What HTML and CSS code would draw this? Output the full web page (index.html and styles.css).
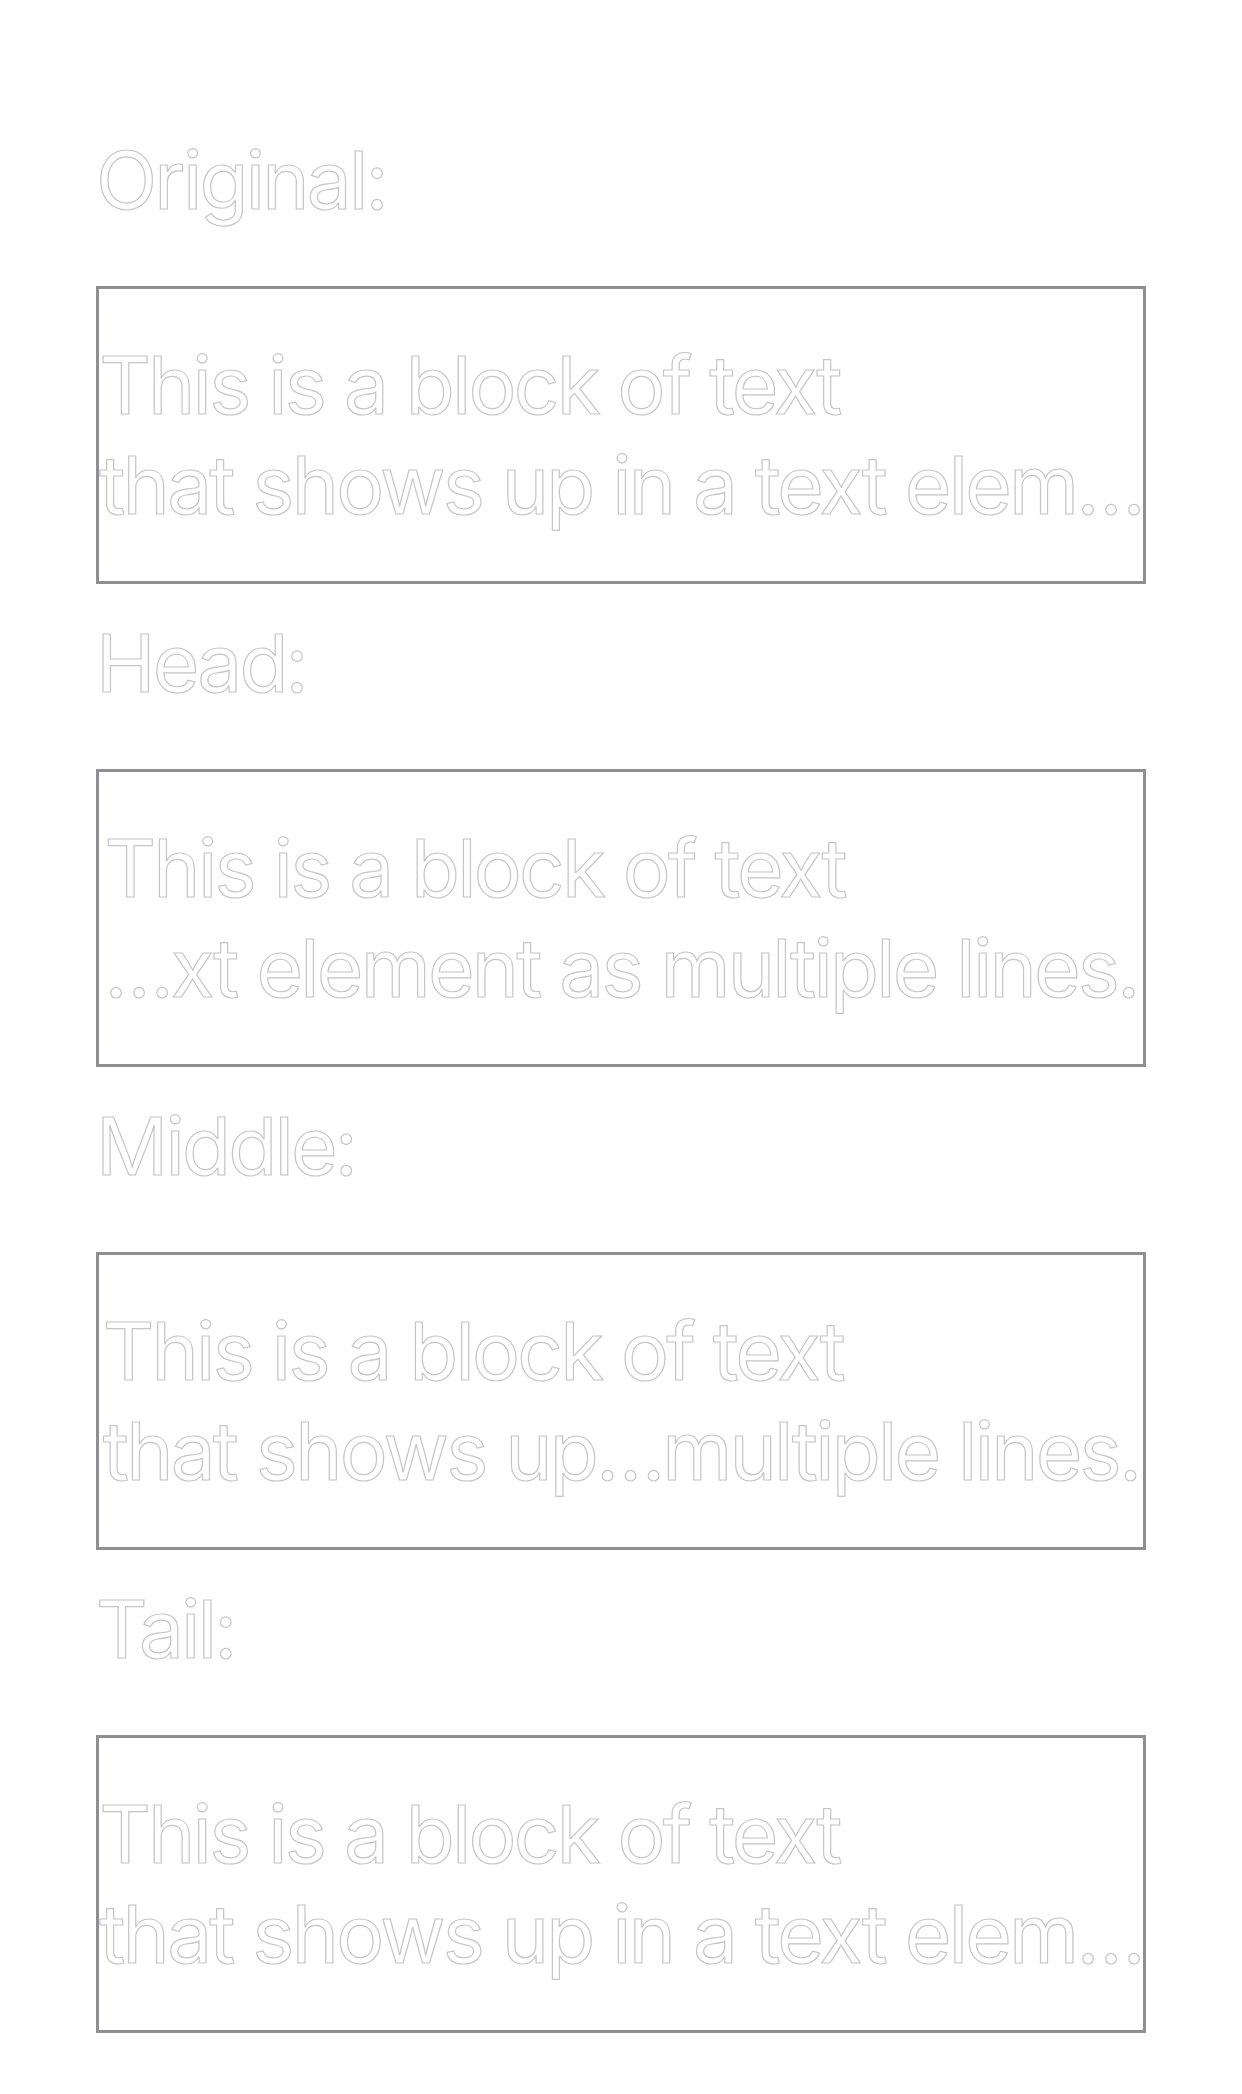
FILE: index.html
```html
<!DOCTYPE html>
<html lang="en">
<head>
<meta charset="utf-8">
<title>Truncation modes</title>
<link rel="stylesheet" href="styles.css">
</head>
<body>
<main class="page">
  <section class="demo">
    <div class="label">Original:</div>
    <div class="frame">
      <div class="text">
        <div class="line">This is a block of text</div>
        <div class="line">that shows up in a text elem…</div>
      </div>
    </div>
  </section>
  <section class="demo">
    <div class="label">Head:</div>
    <div class="frame">
      <div class="text">
        <div class="line">This is a block of text</div>
        <div class="line">…xt element as multiple lines.</div>
      </div>
    </div>
  </section>
  <section class="demo">
    <div class="label">Middle:</div>
    <div class="frame">
      <div class="text">
        <div class="line">This is a block of text</div>
        <div class="line">that shows up…multiple lines.</div>
      </div>
    </div>
  </section>
  <section class="demo">
    <div class="label">Tail:</div>
    <div class="frame">
      <div class="text">
        <div class="line">This is a block of text</div>
        <div class="line">that shows up in a text elem…</div>
      </div>
    </div>
  </section>
</main>
</body>
</html>
```

FILE: styles.css
```css
html, body {
  margin: 0;
  padding: 0;
  background: #ffffff;
}

.page {
  padding: 130px 96px 0 96px;
  display: flex;
  flex-direction: column;
  gap: 29px;
  font-family: Inter, "Noto Sans", "Liberation Sans", sans-serif;
  font-size: 80px;
  line-height: 100px;
  letter-spacing: -2.8px;
  color: #ffffff;
  -webkit-text-stroke: 1.2px #c6c6c6;
}

.demo {
  display: flex;
  flex-direction: column;
  gap: 56px;
}

.label {
  height: 100px;
  white-space: nowrap;
}

.frame {
  box-sizing: border-box;
  height: 298px;
  border: 3px solid #8e8e93;
  display: flex;
  align-items: center;
  justify-content: center;
  overflow: visible;
}

.text {
  display: flex;
  flex-direction: column;
  white-space: nowrap;
}

.line {
  height: 100px;
}
```
